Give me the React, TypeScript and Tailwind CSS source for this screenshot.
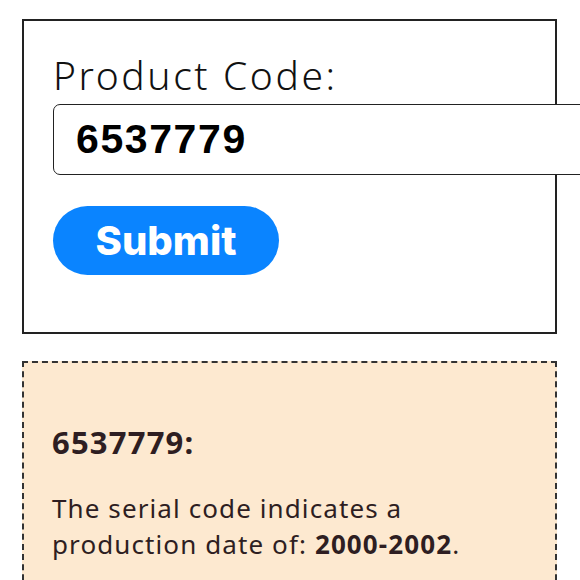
import React from "react";

const geo = { fontFamily: '"Noto Sans", "Open Sans", sans-serif' };

export default function App() {
  return (
    <div className="w-[580px] h-[580px] overflow-hidden bg-white">
      <div className="pl-[22px] pt-[19px] w-[557px]">
        <div className="border-2 border-[#222] h-[315px] pl-[29px] pt-[27px]">
          <label
            className="block text-[39px] leading-[54px] font-light tracking-[2.6px] text-[#111]"
            style={geo}
          >
            Product Code:
          </label>
          <div className="mt-[2px] w-[560px] h-[71px] rounded-[7px] border-[1.5px] border-[#222] bg-white flex items-center pl-[22px]">
            <span
              className="text-[41px] font-bold text-black tracking-[1.6px]"
              style={{ fontFamily: '"Liberation Sans", Arial, sans-serif' }}
            >
              6537779
            </span>
          </div>
          <button
            className="mt-[31px] w-[226px] h-[69px] rounded-full bg-[#0a84ff] text-white text-[40px] font-extrabold flex items-center justify-center"
            style={{ fontFamily: "Inter, sans-serif" }}
          >
            Submit
          </button>
        </div>

        <div className="mt-[27px] h-[260px] border-2 border-dashed border-[#333] bg-[#fde9d0] pl-[28px] pt-[59px] text-[#2e1e22]" style={geo}>
          <div className="text-[31px] leading-[40px] font-bold tracking-[1.2px]">6537779:</div>
          <p className="mt-[28px] text-[26px] leading-[36px] font-normal tracking-[1.1px]">
            The serial code indicates a
            <br />
            production date of: <span className="font-bold">2000-2002</span>.
          </p>
        </div>
      </div>
    </div>
  );
}
